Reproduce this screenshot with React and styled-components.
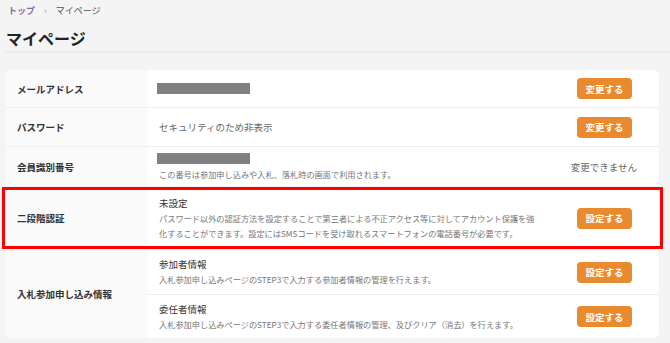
import React from 'react';
import styled, {createGlobalStyle} from 'styled-components';

// 全体のスタイル
const GlobalStyle = createGlobalStyle`
    body {
        margin: 0;
        background: #f4f4f4;
        font-family: "Noto Sans CJK JP", "Noto Sans", sans-serif;
        color: #333;
    }
`

const Page = styled.div`
    width: 670px;
    height: 343px;
    overflow: hidden;
`

const Breadcrumb = styled.nav`
    display: flex;
    align-items: center;
    gap: 9px;
    padding: 5px 0 0 8px;
    font-size: 9px;
    line-height: 12px;
    color: #555;
`

const Crumb = styled.span`
    color: ${props => props.$link ? '#8a62a6' : '#555'};
    font-weight: ${props => props.$link ? 700 : 400};
`

const Sep = styled.span`
    color: #999;
    font-size: 9px;
`

const Title = styled.h1`
    margin: 11px 0 0 5px;
    padding: 0 0 3px 1px;
    font-size: 16px;
    line-height: 20px;
    font-weight: 700;
    color: #222;
    border-bottom: 2px solid #ebebeb;
`

const Card = styled.div`
    margin: 17px 11px 0 5px;
    background: #fff;
    border-radius: 6px;
`

const Row = styled.div`
    position: relative;
    display: grid;
    grid-template-columns: 143px 1fr;
    min-height: ${props => props.$h}px;
    border-bottom: ${props => props.$last ? 'none' : '1px solid #efefef'};
    box-sizing: border-box;
`

// 注目枠（赤）
const Highlight = styled.div`
    position: absolute;
    top: 0;
    bottom: 0;
    left: -3px;
    right: -4px;
    border: 3px solid #ff0000;
    pointer-events: none;
`

const Label = styled.div`
    display: flex;
    align-items: center;
    padding-left: 12px;
    background: #fafafa;
    font-size: 9.5px;
    font-weight: 700;
    color: #333;
    border-radius: ${props => props.$first ? '6px 0 0 0' : props.$last ? '0 0 0 6px' : '0'};
`

const Cells = styled.div`
    display: flex;
    flex-direction: column;
`

const Cell = styled.div`
    flex: 1;
    display: flex;
    align-items: center;
    justify-content: space-between;
    padding: 0 27px 0 11px;
    min-height: ${props => props.$h}px;
    border-bottom: ${props => props.$divider ? '1px solid #efefef' : 'none'};
`

const Body = styled.div`
    display: flex;
    flex-direction: column;
    align-self: ${props => props.$top ? 'flex-start' : 'center'};
    padding-top: ${props => props.$top ? 6 : 0}px;
`

const Masked = styled.div`
    width: 93px;
    height: 11px;
    margin-left: -2px;
    background: #808080;
`

const Value = styled.div`
    font-size: 9.5px;
    line-height: 15px;
    color: ${props => props.$muted ? '#666' : '#333'};
`

const Note = styled.div`
    font-size: 8.2px;
    line-height: 15px;
    color: #777;
    margin-top: ${props => props.$gap || 0}px;
    max-width: ${props => props.$max ? props.$max + 'px' : 'none'};
`

const Button = styled.button`
    flex-shrink: 0;
    width: 55px;
    height: 21px;
    border: none;
    border-radius: 4px;
    background: #e98a2f;
    color: #fff;
    font-family: inherit;
    font-size: 9.5px;
    font-weight: 700;
    padding: 0;
    margin-left: 20px;
`

const Fixed = styled.span`
    font-size: 9.5px;
    color: #666;
    margin-right: -5px;
`

const App = () => {
    return (
        <Page>
            <GlobalStyle />
            <Breadcrumb>
                <Crumb $link>トップ</Crumb>
                <Sep>›</Sep>
                <Crumb>マイページ</Crumb>
            </Breadcrumb>
            <Title>マイページ</Title>

            <Card>
                <Row $h={38}>
                    <Label $first>メールアドレス</Label>
                    <Cell>
                        <Masked />
                        <Button>変更する</Button>
                    </Cell>
                </Row>
                <Row $h={39}>
                    <Label>パスワード</Label>
                    <Cell>
                        <Value $muted>セキュリティのため非表示</Value>
                        <Button>変更する</Button>
                    </Cell>
                </Row>
                <Row $h={40}>
                    <Label>会員識別番号</Label>
                    <Cell>
                        <Body $top>
                            <Masked />
                            <Note $gap={3}>この番号は参加申し込みや入札、落札時の画面で利用されます。</Note>
                        </Body>
                        <Fixed>変更できません</Fixed>
                    </Cell>
                </Row>
                <Row $h={63}>
                    <Label>二段階認証</Label>
                    <Cell>
                        <Body>
                            <Value>未設定</Value>
                            <Note $max={382}>パスワード以外の認証方法を設定することで第三者による不正アクセス等に対してアカウント保護を強化することができます。設定にはSMSコードを受け取れるスマートフォンの電話番号が必要です。</Note>
                        </Body>
                        <Button>設定する</Button>
                    </Cell>
                    <Highlight />
                </Row>
                <Row $h={87} $last>
                    <Label $last>入札参加申し込み情報</Label>
                    <Cells>
                        <Cell $h={44} $divider>
                            <Body>
                                <Value>参加者情報</Value>
                                <Note>入札参加申し込みページのSTEP3で入力する参加者情報の管理を行えます。</Note>
                            </Body>
                            <Button>設定する</Button>
                        </Cell>
                        <Cell $h={43}>
                            <Body>
                                <Value>委任者情報</Value>
                                <Note>入札参加申し込みページのSTEP3で入力する委任者情報の管理、及びクリア（消去）を行えます。</Note>
                            </Body>
                            <Button>設定する</Button>
                        </Cell>
                    </Cells>
                </Row>
            </Card>
        </Page>
    );
};

export default App;
